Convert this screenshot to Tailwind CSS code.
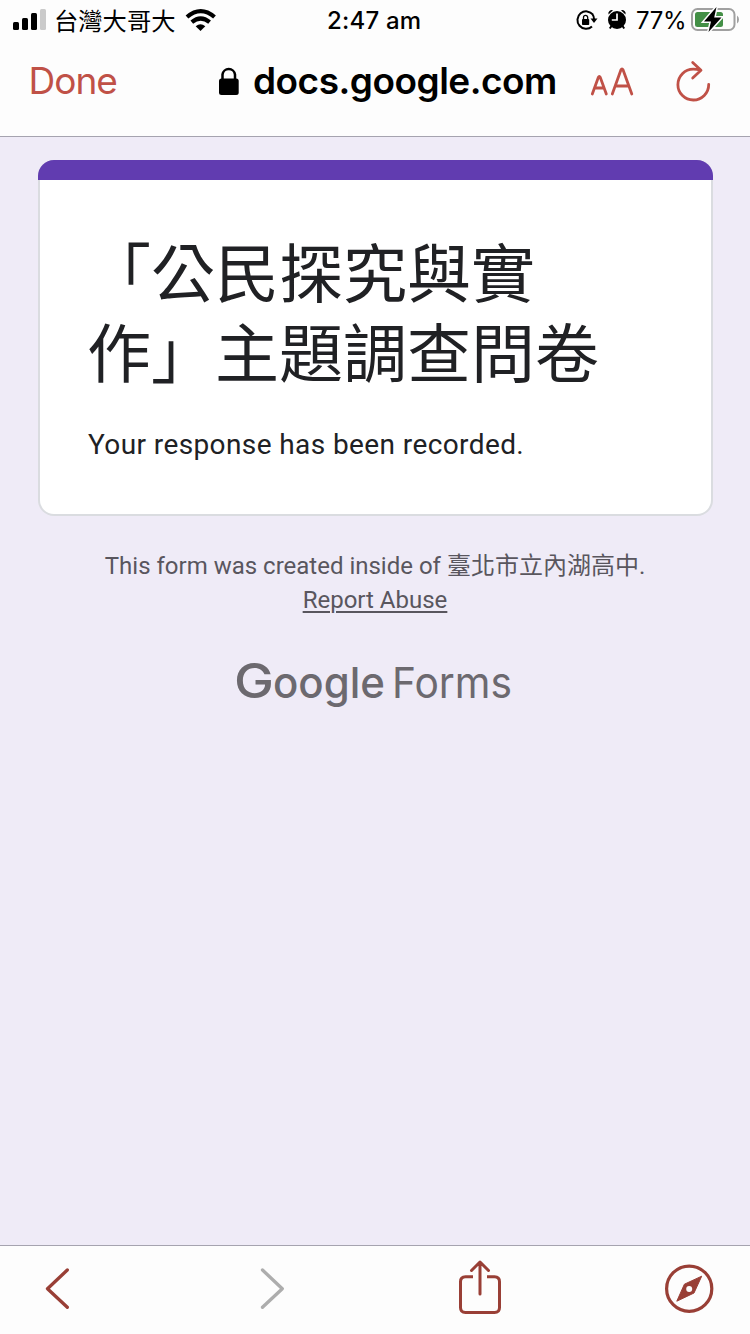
<!DOCTYPE html>
<html lang="zh-Hant">
<head>
<meta charset="utf-8">
<title>Google Forms</title>
<script src="https://cdn.jsdelivr.net/npm/@tailwindcss/browser@4"></script>
</head>
<body class="flex h-[1334px] w-[750px] flex-col overflow-hidden bg-[#efebf7] font-['Roboto','Noto_Sans_CJK_TC',sans-serif]">
<header class="h-[137px] shrink-0 border-b border-[#a5a3af] bg-[#fdfdfd] font-['Inter','Noto_Sans_CJK_TC',sans-serif] text-black">
  <div class="grid h-10 grid-cols-[327px_1fr_175px] items-start">
    <div class="flex h-10 items-start pl-[13px]">
      <svg class="h-10 w-[33px] shrink-0" viewBox="13 0 33 40"><rect x="13" y="22" width="6" height="8" rx="1.5"/><rect x="22" y="18" width="6" height="12" rx="1.5"/><rect x="31" y="13" width="6" height="17" rx="1.5"/><rect x="40" y="9" width="6" height="21" rx="1.5" fill="#cacaca"/></svg>
      <span class="ml-[8px] h-10 w-[121px] whitespace-nowrap font-['Noto_Sans_CJK_TC',sans-serif] text-[24.3px] leading-10">台灣大哥大</span>
      <svg class="ml-[10px] h-10 w-[31px] shrink-0" viewBox="185 0 31 40" fill="none" stroke="#000" stroke-width="4.2"><path d="M187 17Q200.700 5.300 214.500 17"/><path d="M191.800 22.200Q200.700 14.800 209.600 22.200"/><path d="M195.700 26.300Q200.500 22.200 205.300 26.300L200.500 31Z" fill="#000" stroke="none"/></svg>
    </div>
    <span class="h-10 whitespace-nowrap text-[24px] font-medium leading-[42px] tracking-[0.2px]">2:47 am</span>
    <div class="flex h-10 items-start">
      <svg class="h-10 w-[54px] shrink-0" viewBox="575 0 54 40"><path d="M593 14.700A8.700 8.700 0 1 0 592 26.500M592.300 14A8.700 8.700 0 0 1 594 19" fill="none" stroke="#000" stroke-width="2"/><path d="M590.500 18.500H597.500L594 23Z"/><rect x="582" y="19" width="7.200" height="6" rx=".8"/><path d="M583.500 19V17.500A2.100 2.100 0 0 1 587.700 17.500V19" fill="none" stroke="#000" stroke-width="1.300"/><circle cx="617" cy="20" r="9"/><path d="M608.500 14.500A3.500 3.500 0 0 1 613 10.200ZM625.500 14.500A3.500 3.500 0 0 0 621 10.200Z"/><path d="M611.500 26L609.800 28.500M622.500 26L624.200 28.500" stroke="#000" stroke-width="2"/><path d="M617 13.500V20H611.800" stroke="#fff" stroke-width="1.700" fill="none"/></svg>
      <span class="ml-[7px] h-10 w-[49px] whitespace-nowrap text-[24px] leading-[42px] tracking-[-0.3px]">77%</span>
      <svg class="ml-[5px] h-10 w-[50px] shrink-0" viewBox="690 0 50 40"><rect x="692" y="9" width="42.500" height="21" rx="5.500" fill="none" stroke="#a0a0a0" stroke-width="2"/><path d="M737 15.500Q739 17 739 19.500Q739 22 737 23.500Z" fill="#a0a0a0"/><rect x="695" y="12" width="28" height="15" rx="2.500" fill="#438f46"/><path d="M716.500 7L704 21.500H711L708.500 32L721.500 17.500H714.200Z" stroke="#fdfdfd" stroke-width="3" paint-order="stroke"/></svg>
    </div>
  </div>
  <nav class="flex h-[82px] items-center text-[#c05147]">
    <span class="w-[188px] pl-[28.5px] text-[37px] leading-[80px] tracking-[-1px]">Done</span>
    <svg class="ml-[30px] h-[82px] w-[22px] shrink-0" viewBox="218 40 22 82"><rect x="219" y="78.500" width="19.700" height="16.500" rx="2.500" fill="#000"/><path d="M222.500 79V74.500A6.300 6.300 0 0 1 235 74.500V79" fill="none" stroke="#000" stroke-width="2.500"/></svg>
    <span class="ml-[13px] w-[304px] whitespace-nowrap text-[37px] font-semibold leading-[80px] tracking-[-0.5px] text-black">docs.google.com</span>
    <svg class="ml-[33px] h-[82px] w-[122px] shrink-0" viewBox="590 40 122 82" fill="none" stroke="#c05147" stroke-width="2.800" stroke-linecap="round" stroke-linejoin="round"><path d="M592.300 94L598.300 77.500Q599.300 75.500 600.300 77.500L606.300 94M594.700 88H604"/><path d="M612.300 94L620.900 70Q622 67.800 623.100 70L631.800 94M615.500 86H628.700"/><path d="M708.700 84.500A15.400 15.400 0 1 1 693.300 69.200Q697 69.200 700.500 70.200M692.700 62.500L701 70.300L692.700 78"/></svg>
  </nav>
</header>
<main class="flex-1 pl-[38px] pr-[37px] pt-[23px]">
  <section class="h-[356px] overflow-hidden rounded-2xl bg-[#dadce0] text-[#202124]">
    <div class="h-5 bg-[#613cb0]"></div>
    <div class="mx-0.5 h-[334px] rounded-b-[14px] bg-white pl-[47px] pt-[56px]">
      <h1 class="text-[64px] font-normal leading-[80px]">「公民探究與實<br>作」主題調查問卷</h1>
      <p class="mt-[29px] whitespace-nowrap pl-px text-[28px] leading-10 tracking-[0.4px]">Your response has been recorded.</p>
    </div>
  </section>
  <footer class="pr-px pt-[33px] text-center text-[24px] leading-[34px] text-[#59565e]">
    <p class="whitespace-nowrap">This form was created inside of 臺北市立內湖高中.</p>
    <p><a class="underline decoration-[1.5px] underline-offset-[3px]">Report Abuse</a></p>
    <svg class="mx-auto mt-[32px] h-[72px] w-[290px] overflow-visible" viewBox="230 649 290 72" fill="#6c696f" font-family="Inter, sans-serif"><text x="234" y="697.500" font-size="48" font-weight="500" textLength="40" lengthAdjust="spacingAndGlyphs">G</text><text x="273" y="697.500" font-size="43" font-weight="500" textLength="112" lengthAdjust="spacingAndGlyphs">oogle</text><text x="392" y="698" font-size="43" textLength="120" lengthAdjust="spacingAndGlyphs">Forms</text></svg>
  </footer>
</main>
<nav class="flex h-[89px] shrink-0 items-center border-t border-[#a5a3af] bg-[#fdfdfd] pl-[45px] text-[#993f36]">
  <svg class="h-[88px] w-[25px]" viewBox="45 1246 25 88" fill="none" stroke="currentColor" stroke-width="3.300" stroke-linecap="round" stroke-linejoin="round"><path d="M67.300 1270L47.500 1288.700L67.300 1307.300"/></svg>
  <svg class="ml-[190px] h-[88px] w-[25px]" viewBox="260 1246 25 88" fill="none" stroke="#adadad" stroke-width="3.300" stroke-linecap="round" stroke-linejoin="round"><path d="M262.500 1270L282.300 1288.700L262.500 1307.300"/></svg>
  <svg class="ml-[173px] h-[88px] w-[44px]" viewBox="458 1246 44 88" fill="none" stroke="currentColor" stroke-width="3" stroke-linecap="round" stroke-linejoin="round"><path d="M473 1276.800H465.500Q460.500 1276.800 460.500 1281.800V1307.500Q460.500 1312.500 465.500 1312.500H494.500Q499.500 1312.500 499.500 1307.500V1281.800Q499.500 1276.800 494.500 1276.800H487" stroke-linecap="butt"/><path d="M480 1294V1262M471.500 1270.500L480 1262L488.500 1270.500"/></svg>
  <svg class="ml-[162px] h-[88px] w-[50px]" viewBox="664 1246 50 88"><circle cx="689.200" cy="1288.700" r="22.600" fill="none" stroke="currentColor" stroke-width="3.200"/><path d="M701.700 1276.200L694 1293L676.800 1301.200L684.400 1284.200Z" fill="currentColor" stroke="currentColor" stroke-linejoin="round"/><circle cx="689.200" cy="1288.900" r="3" fill="#fdfdfd"/></svg>
</nav>
</body>
</html>
